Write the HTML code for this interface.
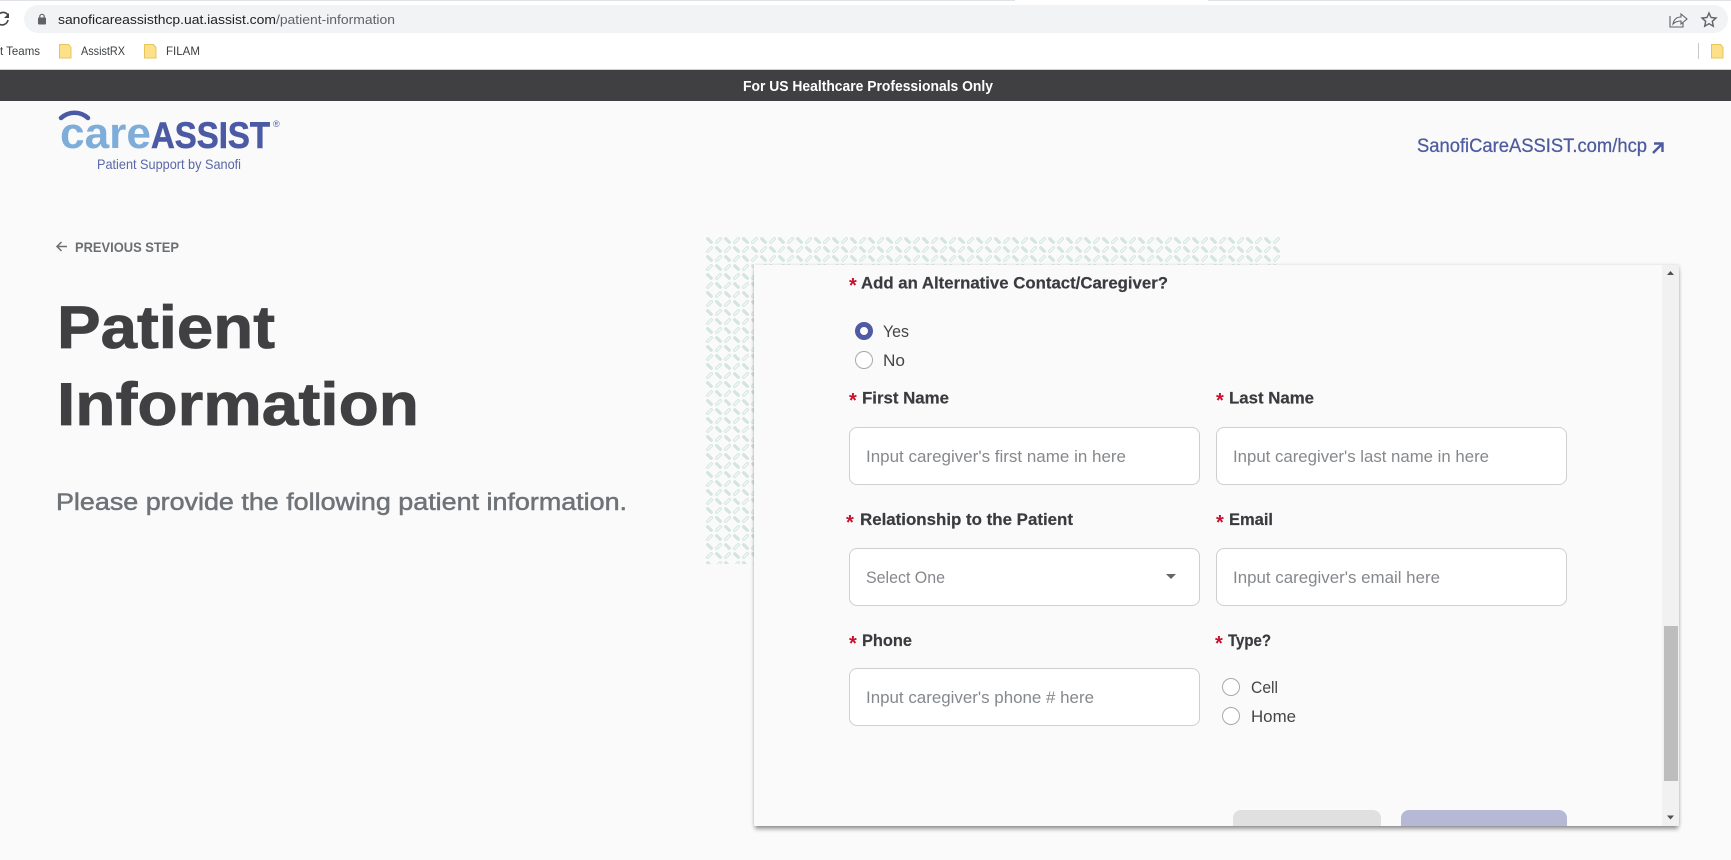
<!DOCTYPE html>
<html><head><meta charset="utf-8"><title>Patient Information</title>
<style>
html,body{margin:0;padding:0;width:1731px;height:860px;overflow:hidden;background:#fafafa;font-family:"Liberation Sans",sans-serif}
.a{position:absolute}
.box{position:absolute;background:#fff;border:1px solid #cfcfd2;border-radius:8px;box-sizing:border-box;height:58px;width:351px}
.r{position:absolute;width:18px;height:18px;border-radius:50%;border:1px solid #a9a9a9;background:#fff;box-sizing:border-box}
svg{position:absolute;left:0;top:0}
text{font-family:"Liberation Sans",sans-serif}
.l{font-size:16.5px;font-weight:700;fill:#3a3b3f;stroke:#3a3b3f;stroke-width:.2px}
.s{font-size:20px;font-weight:700;fill:#c8102e}
.p{font-size:16.5px;fill:#85888c}
.o{font-size:16.5px;fill:#444548}
</style></head><body>
<div class="a" style="left:0;top:0;width:1731px;height:70px;background:#fff"></div>
<div class="a" style="left:0;top:0;width:1015px;height:1px;background:#dee1e6"></div>
<div class="a" style="left:1208px;top:0;width:523px;height:1px;background:#dee1e6"></div>
<div class="a" style="left:24px;top:5px;width:1704px;height:28px;background:#f1f3f4;border-radius:14px"></div>
<div class="a" style="left:0;top:69px;width:1731px;height:1px;background:#d0d0d0"></div>
<div class="a" style="left:0;top:70px;width:1731px;height:31px;background:#404042"></div>
<svg width="1731" height="70" style="left:0;top:0">
 <path d="M59.500 44.500h9l2.500 3v10.500h-11.500z" fill="#fde08a" stroke="#e8c45c"/>
 <path d="M144.500 44.500h9l2.500 3v10.500h-11.500z" fill="#fde08a" stroke="#e8c45c"/>
 <path d="M1711.500 44.500h9l2.500 3v10.500h-11.500z" fill="#fde08a" stroke="#e8c45c"/>
</svg>
<div class="a" style="left:1698px;top:43px;width:1px;height:16px;background:#c8c8c8"></div>

<svg class="a" style="left:705px;top:236px" width="575" height="328">
<defs><pattern id="pt" width="18" height="18" patternUnits="userSpaceOnUse">
<g fill="none" stroke-linecap="round">
<path stroke="#d3e4e1" stroke-width="3.200" d="M2.700 2.700L6.300 6.300M15.300 2.700L11.700 6.300M2.700 15.300L6.300 11.700M15.300 15.300L11.700 11.700"/>
<path stroke="#f5f8f7" stroke-width="1.400" d="M15.300 2.700L11.700 6.300M2.700 15.300L6.300 11.700"/></g>
</pattern></defs>
<rect width="575" height="328" fill="url(#pt)"/></svg>

<div class="a" style="left:754px;top:265px;width:925px;height:561px;background:#fafafa;box-shadow:0 4px 4px -1px rgba(0,0,0,.38),-1px 0 3px rgba(0,0,0,.06),1px 0 3px rgba(0,0,0,.1);overflow:hidden">
 <div class="a" style="left:908px;top:0;width:17px;height:561px;background:#f1f1f1"></div>
 <div class="a" style="left:910px;top:361px;width:13.500px;height:155px;background:#bdbdbd"></div>
 <div class="a" style="left:479px;top:545px;width:148px;height:30px;background:#e0e0e0;border-radius:8px"></div>
 <div class="a" style="left:647px;top:545px;width:166px;height:30px;background:#b5b9d6;border-radius:8px"></div>
</div>

<div class="box" style="left:849px;top:427px"></div>
<div class="box" style="left:1216px;top:427px"></div>
<div class="box" style="left:849px;top:548px"></div>
<div class="box" style="left:1216px;top:548px"></div>
<div class="box" style="left:849px;top:668px"></div>

<div class="r" style="left:855px;top:322px;border:5px solid #4f5ba3"></div>
<div class="r" style="left:855px;top:351px"></div>
<div class="r" style="left:1222px;top:678px"></div>
<div class="r" style="left:1222px;top:707px"></div>

<svg width="1731" height="860" viewBox="0 0 1731 860">
 <path d="M8 15a6 6 0 0 0-9-1M-1 24a6 6 0 0 0 9-4" fill="none" stroke="#444" stroke-width="1.600"/>
 <path d="M9 13v5H4z" fill="#444"/>
 <rect x="38" y="17.500" width="8" height="7" rx="1" fill="#5f6368"/>
 <path d="M39.800 18v-1.500a2.200 2.200 0 0 1 4.400 0V18" fill="none" stroke="#5f6368" stroke-width="1.200"/>
 <text x="58" y="24" font-size="13" fill="#202124" textLength="337" lengthAdjust="spacingAndGlyphs"><tspan>sanoficareassisthcp.uat.iassist.com</tspan><tspan fill="#5f6368">/patient-information</tspan></text>
 <path d="M1670 16v11h13v-4M1673 24c1-5 4-7 8-7v-3l6 5-6 5v-3c-3 0-6 1-8 3z" fill="none" stroke="#5f6368" stroke-width="1.100"/>
 <path d="M1709 13l2 4.500 5 .5-3.700 3.300 1 4.900-4.300-2.500-4.300 2.500 1-4.900-3.700-3.300 5-.5z" fill="none" stroke="#5f6368" stroke-width="1.400"/>
 <text x="0" y="55" font-size="12" fill="#3c4043" textLength="40" lengthAdjust="spacingAndGlyphs">t Teams</text>
 <text x="81" y="55" font-size="12" fill="#3c4043" textLength="44" lengthAdjust="spacingAndGlyphs">AssistRX</text>
 <text x="166" y="55" font-size="12" fill="#3c4043" textLength="34" lengthAdjust="spacingAndGlyphs">FILAM</text>
 <text x="743" y="91" font-size="14.500" font-weight="700" fill="#fff" textLength="250" lengthAdjust="spacingAndGlyphs">For US Healthcare Professionals Only</text>
 <path d="M61 118c8-7 19-7 27 0" fill="none" stroke="#4a5aa5" stroke-width="4.500" stroke-linecap="round"/>
 <text x="60" y="148" font-size="44" font-weight="700" fill="#7fadd9" textLength="91" lengthAdjust="spacingAndGlyphs">care</text>
 <text x="151" y="148" font-size="37" font-weight="700" fill="#4a5aa5" stroke="#4a5aa5" stroke-width=".6" textLength="119" lengthAdjust="spacingAndGlyphs">ASSIST</text>
 <text x="273" y="127" font-size="9" fill="#4a5aa5">®</text>
 <text x="97" y="169" font-size="14" fill="#5a67a6" textLength="144" lengthAdjust="spacingAndGlyphs">Patient Support by Sanofi</text>
 <text x="1417" y="152" font-size="19" fill="#4d5a9e" stroke="#4d5a9e" stroke-width=".25" textLength="230" lengthAdjust="spacingAndGlyphs">SanofiCareASSIST.com/hcp</text>
 <path d="M1653 153l9-9M1654 143.500h8.500v8.500" fill="none" stroke="#4d5a9e" stroke-width="2.400"/>
 <path d="M67 246.500H57M61.500 242l-4.500 4.500 4.500 4.500" fill="none" stroke="#6b6e72" stroke-width="1.500"/>
 <text x="75" y="252" font-size="14" font-weight="700" fill="#6b6e72" textLength="104" lengthAdjust="spacingAndGlyphs">PREVIOUS STEP</text>
 <text x="57" y="348" font-size="60" font-weight="700" fill="#404042" stroke="#404042" stroke-width=".8" textLength="218" lengthAdjust="spacingAndGlyphs">Patient</text>
 <text x="57" y="425" font-size="60" font-weight="700" fill="#404042" stroke="#404042" stroke-width=".8" textLength="362" lengthAdjust="spacingAndGlyphs">Information</text>
 <text x="56" y="510" font-size="24" fill="#6f7377" stroke="#6f7377" stroke-width=".5" textLength="571" lengthAdjust="spacingAndGlyphs">Please provide the following patient information.</text>
 <text x="849" y="292" class="s">*</text><text x="861" y="288.500" class="l" textLength="307" lengthAdjust="spacingAndGlyphs">Add an Alternative Contact/Caregiver?</text>
 <text x="883" y="337" class="o" textLength="26" lengthAdjust="spacingAndGlyphs">Yes</text>
 <text x="883" y="366" class="o" textLength="22" lengthAdjust="spacingAndGlyphs">No</text>
 <text x="849" y="407" class="s">*</text><text x="862" y="403.500" class="l" textLength="87" lengthAdjust="spacingAndGlyphs">First Name</text>
 <text x="1216" y="407" class="s">*</text><text x="1229" y="403.500" class="l" textLength="85" lengthAdjust="spacingAndGlyphs">Last Name</text>
 <text class="p" x="866" y="462" textLength="260" lengthAdjust="spacingAndGlyphs">Input caregiver's first name in here</text>
 <text class="p" x="1233" y="462" textLength="256" lengthAdjust="spacingAndGlyphs">Input caregiver's last name in here</text>
 <text x="846" y="529" class="s">*</text><text x="860" y="525" class="l" textLength="213" lengthAdjust="spacingAndGlyphs">Relationship to the Patient</text>
 <text x="1216" y="529" class="s">*</text><text x="1229" y="525" class="l" textLength="44" lengthAdjust="spacingAndGlyphs">Email</text>
 <text class="p" x="866" y="583" textLength="79" lengthAdjust="spacingAndGlyphs">Select One</text>
 <path d="M1166 574h10l-5 5z" fill="#666"/>
 <text class="p" x="1233" y="583" textLength="207" lengthAdjust="spacingAndGlyphs">Input caregiver's email here</text>
 <text x="849" y="650" class="s">*</text><text x="862" y="646" class="l" textLength="50" lengthAdjust="spacingAndGlyphs">Phone</text>
 <text x="1215" y="650" class="s">*</text><text x="1228" y="646" class="l" textLength="43" lengthAdjust="spacingAndGlyphs">Type?</text>
 <text class="p" x="866" y="703" textLength="228" lengthAdjust="spacingAndGlyphs">Input caregiver's phone # here</text>
 <text x="1251" y="693" class="o" textLength="27" lengthAdjust="spacingAndGlyphs">Cell</text>
 <text x="1251" y="722" class="o" textLength="45" lengthAdjust="spacingAndGlyphs">Home</text>
 <path d="M1667 275l3.500-4 3.500 4z" fill="#505050"/>
 <path d="M1667 815.500l3.500 4 3.500-4z" fill="#505050"/>
</svg>
</body></html>
